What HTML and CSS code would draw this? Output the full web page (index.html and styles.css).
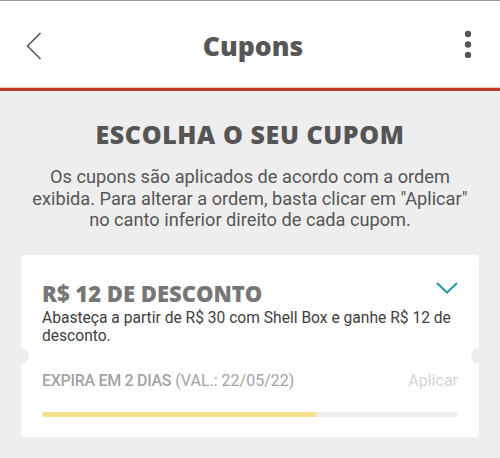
FILE: index.html
```
<!DOCTYPE html>
<html>
	<head>
		<meta charset="utf-8">
		<title>Cupons</title>
		<link rel="stylesheet" href="styles.css">
	</head>
	<body>
		<div class="topbar">
			<a class="back" href="#">
				<svg width="16" height="28" viewBox="0 0 16 28"><path d="M14.5 1 L1.5 14 L14.5 27" fill="none" stroke="#555" stroke-width="1.6"/></svg>
			</a>
			<h1>Cupons</h1>
			<a class="more" href="#">
				<svg width="8" height="28" viewBox="0 0 8 28"><circle cx="4" cy="4" r="3.2" fill="#555"/><circle cx="4" cy="14.5" r="3.2" fill="#555"/><circle cx="4" cy="25" r="3.2" fill="#555"/></svg>
			</a>
		</div>
		<div class="content">
			<h2>ESCOLHA O SEU CUPOM</h2>
			<p class="intro">Os cupons são aplicados de acordo com a ordem exibida. Para alterar a ordem, basta clicar em "Aplicar" no canto inferior direito de cada cupom.</p>
			<div class="coupon">
				<div class="coupon-head">
					<h3>R$ 12 DE DESCONTO</h3>
					<svg class="toggle" width="22" height="12" viewBox="0 0 22 12"><path d="M1 1 L11 10.5 L21 1" fill="none" stroke="#1f9aa8" stroke-width="2"/></svg>
				</div>
				<p class="desc">Abasteça a partir de R$ 30 com Shell Box e ganhe R$ 12 de desconto.</p>
				<div class="coupon-foot">
					<span class="expire"><strong>EXPIRA EM 2 DIAS</strong> (VAL.: 22/05/22)</span>
					<span class="apply">Aplicar</span>
				</div>
				<div class="bar"><div class="bar-fill" style="width:66%"></div></div>
			</div>
		</div>
	</body>
</html>
```
FILE: styles.css
```
body, h1, h2, h3, p{
	margin: 0;
	padding: 0;
}
body{
	background: #eeeeee;
	font-family: Roboto, "Liberation Sans", sans-serif;
	color: #555;
}
.topbar{
	height: 87px;
	background: #fff;
	border-top: 1px solid #9a9a9a;
	border-bottom: 3px solid #bf3824;
	box-shadow: 0 -1px 0 #f3c6bd inset;
	display: flex;
	align-items: center;
	justify-content: space-between;
	padding: 0 28px 0 26px;
}
.topbar a{
	display: flex;
}
.back{
	margin-top: 2px;
}
.more{
	margin-top: -1px;
}
h1{
	font-family: "Open Sans", Lato, sans-serif;
	font-weight: 800;
	font-size: 26.5px;
	color: #575757;
	margin-top: 3px;
}
.content{
	padding: 28px 21px 0;
	text-align: center;
}
h2{
	font-family: "Open Sans", Lato, sans-serif;
	font-weight: 800;
	font-size: 25px;
	letter-spacing: 0.6px;
	line-height: 30px;
	color: #555;
}
.intro{
	font-size: 18.2px;
	line-height: 21.6px;
	color: #555;
	margin-top: 17px;
	padding: 0 2px;
}
.coupon{
	margin-top: 24px;
	background: #fff;
	border-radius: 4px;
	padding: 24px 21px 20px;
	text-align: left;
	position: relative;
}
.coupon:before, .coupon:after{
	content: "";
	position: absolute;
	top: 93px;
	width: 16px;
	height: 16px;
	border-radius: 50%;
	background: #eeeeee;
}
.coupon:before{
	left: -8px;
}
.coupon:after{
	right: -8px;
}
.coupon-head{
	display: flex;
	justify-content: space-between;
	align-items: flex-start;
}
.toggle{
	margin-top: 3px;
}
h3{
	font-family: "Open Sans", Lato, sans-serif;
	font-weight: 800;
	font-size: 22px;
	line-height: 28px;
	color: #777;
}
.desc{
	font-size: 15.6px;
	line-height: 18.5px;
	color: #404040;
	margin-top: 2px;
}
.coupon-foot{
	display: flex;
	justify-content: space-between;
	margin-top: 25px;
	font-size: 16px;
	line-height: 20px;
	color: #a3a3a3;
}
.expire strong{
	font-weight: 500;
	letter-spacing: -0.3px;
}
.apply{
	color: #d4d4d4;
}
.bar{
	margin-top: 21px;
	height: 5px;
	border-radius: 3px;
	background: #eeeeee;
	overflow: hidden;
}
.bar-fill{
	height: 100%;
	background: #f6e08f;
	border-radius: 3px;
}
```
